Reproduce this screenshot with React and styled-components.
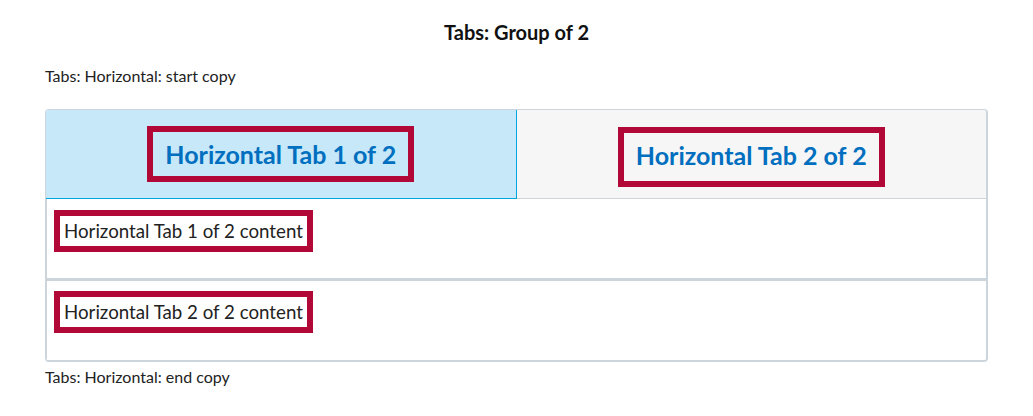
import React from "react";
import styled, { createGlobalStyle } from "styled-components";

const GlobalStyle = createGlobalStyle`
  body {
    margin: 0;
    background: #fff;
    font-family: Lato, "Open Sans", sans-serif;
    color: #222;
  }
`;

const Page = styled.div`
  padding: 20px 45px 0 45px;
`;

const Title = styled.h2`
  margin: 0;
  font-size: 20px;
  line-height: 24px;
  font-weight: 700;
  text-align: center;
  color: #111;
`;

const Note = styled.p`
  margin: ${(p) => (p.$end ? "5px 0 0" : "22px 0 0")};
  font-size: 16px;
  line-height: 19px;
  color: #222;
`;

const Tabs = styled.div`
  margin-top: 24px;
  border: 2px solid #cdd5dc;
  border-top-width: 1px;
  border-left-width: 1px;
  border-radius: 4px;
  overflow: hidden;
`;

const TabList = styled.div`
  display: flex;
`;

const Tab = styled.div`
  flex: 1;
  display: flex;
  justify-content: center;
  align-items: flex-start;
  padding-top: ${(p) => (p.$active ? "16px" : "17px")};
  box-sizing: border-box;
  height: 89px;
  background: ${(p) => (p.$active ? "#c6e8f8" : "#f6f6f6")};
  border-bottom: 1px solid ${(p) => (p.$active ? "#00a6e0" : "#cdd5dc")};
  border-right: ${(p) => (p.$active ? "1px solid #00a6e0" : "none")};
`;

const TabLabel = styled.span`
  display: inline-block;
  border: 6px solid #b20838;
  padding: ${(p) => (p.$active ? "7px 12px" : "7px 12px 11px")};
  font-size: 25px;
  line-height: 30px;
  font-weight: 700;
  color: #006fbf;
`;

const Panel = styled.div`
  height: ${(p) => (p.$first ? "79px" : "82px")};
  box-sizing: border-box;
  padding: ${(p) => (p.$first ? "11px 7px 0" : "10px 7px 0")};
  border-left: 1px solid #cdd5dc;
  border-top: ${(p) => (p.$first ? "none" : "3px solid #cdd5dc")};
  background: #fff;
`;

const PanelText = styled.span`
  display: inline-block;
  border: 6px solid #b20838;
  padding: 4px 4px;
  font-size: 18.7px;
  line-height: 22px;
  color: #222;
`;

export default function App() {
  return (
    <>
      <GlobalStyle />
      <Page>
        <Title>Tabs: Group of 2</Title>
        <Note>Tabs: Horizontal: start copy</Note>
        <Tabs>
          <TabList>
            <Tab $active>
              <TabLabel $active>Horizontal Tab 1 of 2</TabLabel>
            </Tab>
            <Tab>
              <TabLabel>Horizontal Tab 2 of 2</TabLabel>
            </Tab>
          </TabList>
          <Panel $first>
            <PanelText>Horizontal Tab 1 of 2 content</PanelText>
          </Panel>
          <Panel>
            <PanelText>Horizontal Tab 2 of 2 content</PanelText>
          </Panel>
        </Tabs>
        <Note $end>Tabs: Horizontal: end copy</Note>
      </Page>
    </>
  );
}
